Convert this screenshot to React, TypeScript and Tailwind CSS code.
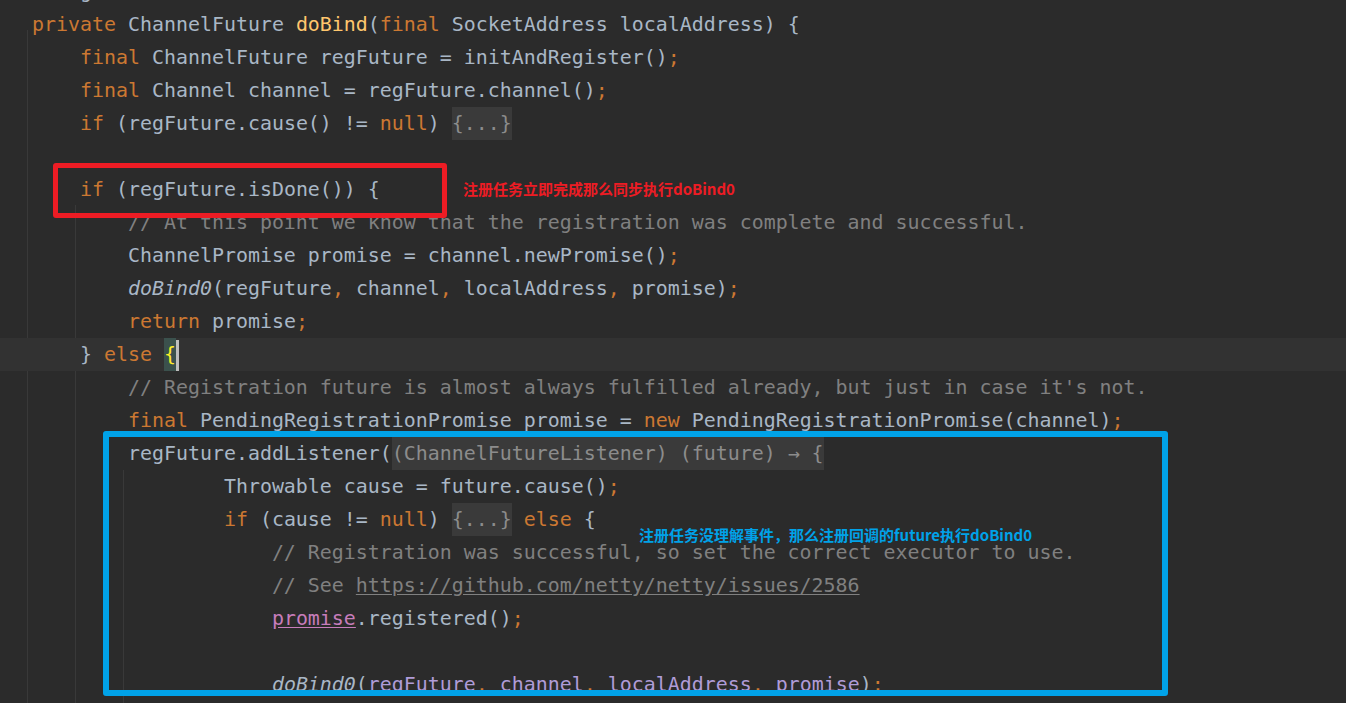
import React from "react";

type Tok = [string, string];

const S: Record<string, string> = {
  k: "text-[#cc7832]",
  p: "text-[#a9b7c6]",
  m: "text-[#ffc66d]",
  c: "text-[#808080]",
  i: "italic text-[#a9b7c6]",
  f: "inline-block leading-[33px] bg-[#3a3a3a] text-[#8c8c8c]",
  u: "text-[#808080] underline underline-offset-2 decoration-[#808080]",
  v: "text-[#c77dbb] underline underline-offset-2 decoration-[#c77dbb]",
  l: "text-[#b09cd8]",
};

const lines: Tok[][] = [
  [["p", "    g"]],
  [["k", "private "], ["p", "ChannelFuture "], ["m", "doBind"], ["p", "("], ["k", "final "], ["p", "SocketAddress localAddress) {"]],
  [["p", "    "], ["k", "final "], ["p", "ChannelFuture regFuture = initAndRegister()"], ["k", ";"]],
  [["p", "    "], ["k", "final "], ["p", "Channel channel = regFuture.channel()"], ["k", ";"]],
  [["p", "    "], ["k", "if "], ["p", "(regFuture.cause() != "], ["k", "null"], ["p", ") "], ["f", "{...}"]],
  [],
  [["p", "    "], ["k", "if "], ["p", "(regFuture.isDone()) {"]],
  [["c", "        // At this point we know that the registration was complete and successful."]],
  [["p", "        ChannelPromise promise = channel.newPromise()"], ["k", ";"]],
  [["p", "        "], ["i", "doBind0"], ["p", "(regFuture"], ["k", ", "], ["p", "channel"], ["k", ", "], ["p", "localAddress"], ["k", ", "], ["p", "promise)"], ["k", ";"]],
  [["p", "        "], ["k", "return "], ["p", "promise"], ["k", ";"]],
  [["p", "    } "], ["k", "else "]],
  [["c", "        // Registration future is almost always fulfilled already, but just in case it's not."]],
  [["p", "        "], ["k", "final "], ["p", "PendingRegistrationPromise promise = "], ["k", "new "], ["p", "PendingRegistrationPromise(channel)"], ["k", ";"]],
  [["p", "        regFuture.addListener("], ["f", "(ChannelFutureListener) (future) → {"]],
  [["p", "                Throwable cause = future.cause()"], ["k", ";"]],
  [["p", "                "], ["k", "if "], ["p", "(cause != "], ["k", "null"], ["p", ") "], ["f", "{...}"], ["k", " else "], ["p", "{"]],
  [["c", "                    // Registration was successful, so set the correct executor to use."]],
  [["c", "                    // See "], ["u", "https://github.com/netty/netty/issues/2586"]],
  [["p", "                    "], ["v", "promise"], ["p", ".registered()"], ["k", ";"]],
  [],
  [["p", "                    "], ["i", "doBind0"], ["p", "("], ["l", "regFuture"], ["k", ", "], ["l", "channel"], ["k", ", "], ["l", "localAddress"], ["k", ", "], ["l", "promise"], ["p", ")"], ["k", ";"]],
];

function Line({ toks, idx }: { toks: Tok[]; idx: number }) {
  const current = idx === 11;
  return (
    <div
      className={
        "h-[33px] leading-[33px] pl-[32px] whitespace-pre " +
        (current ? "bg-[#323232]" : "")
      }
    >
      {toks.map(([k, t], j) => (
        <span key={j} className={S[k]}>
          {t}
        </span>
      ))}
      {current && (
        <>
          <span className="inline-block leading-[33px] bg-[#3b514d] text-[#ffef28]">{"{"}</span>
          <span className="inline-block w-[3px] h-[31px] align-middle bg-[#bdbdbd]" />
        </>
      )}
    </div>
  );
}

export default function App() {
  return (
    <div className="relative w-full h-[703px] overflow-hidden bg-[#2b2b2b] font-['DejaVu_Sans_Mono',monospace] text-[19.93px]">
      {/* indent guides */}
      <div className="absolute left-[27px] top-[30px] bottom-0 w-px bg-[#393939]" />
      <div className="absolute left-[75px] top-[205px] h-[133px] w-px bg-[#393939]" />
      <div className="absolute left-[75px] top-[371px] bottom-0 w-px bg-[#393939]" />
      <div className="absolute left-[123px] top-[470px] bottom-0 w-px bg-[#393939]" />

      <div className="relative mt-[-25px] flex flex-col">
        {lines.map((toks, i) => (
          <Line key={i} toks={toks} idx={i} />
        ))}
      </div>

      {/* annotations */}
      <div className="absolute left-[53px] top-[163px] w-[394px] h-[55px] border-[5px] border-[#ed1c24] rounded-[3px]" />
      <div className="absolute left-[463px] top-[178px] leading-[22px] whitespace-nowrap font-['Noto_Sans_CJK_SC',sans-serif] font-bold text-[15px] text-[#ed1c24]">
        注册任务立即完成那么同步执行doBind0
      </div>
      <div className="absolute left-[103px] top-[431px] w-[1065px] h-[265px] border-[6px] border-[#00a2e8] rounded-[3px]" />
      <div className="absolute left-[639px] top-[524px] leading-[22px] whitespace-nowrap font-['Noto_Sans_CJK_SC',sans-serif] font-bold text-[15px] text-[#00a2e8]">
        注册任务没理解事件，那么注册回调的future执行doBind0
      </div>
    </div>
  );
}
